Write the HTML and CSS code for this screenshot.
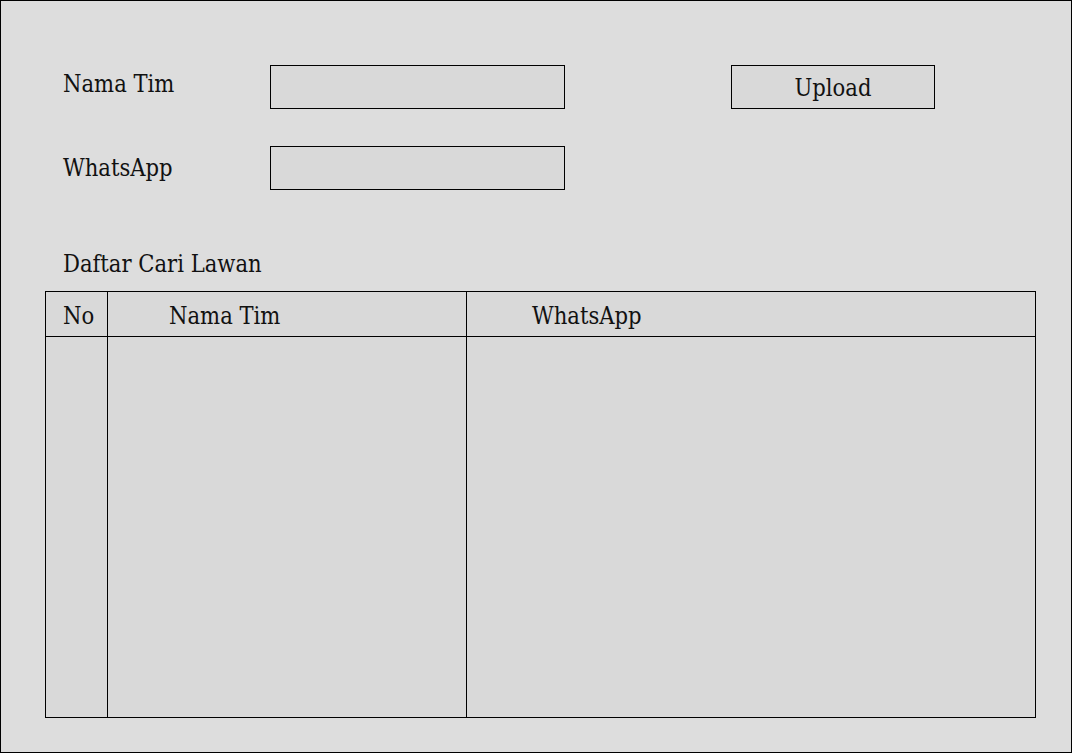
FILE: index.html
```html
<!DOCTYPE html>
<html>
<head>
<meta charset="utf-8">
<link rel="stylesheet" href="styles.css">
</head>
<body>
<div class="page">
  <div class="form-row row-one">
    <div class="label label-up">Nama Tim</div>
    <div class="input"></div>
    <div class="button">Upload</div>
  </div>
  <div class="form-row row-two">
    <div class="label">WhatsApp</div>
    <div class="input"></div>
  </div>
  <div class="section-title">Daftar Cari Lawan</div>
  <div class="table">
    <div class="thead">
      <div class="cell col-no">No</div>
      <div class="cell col-name">Nama Tim</div>
      <div class="cell col-wa">WhatsApp</div>
    </div>
    <div class="tbody">
      <div class="cell col-no"></div>
      <div class="cell col-name"></div>
      <div class="cell col-wa"></div>
    </div>
  </div>
</div>
</body>
</html>
```

FILE: styles.css
```css
html, body {
  margin: 0;
  padding: 0;
  background: #dddddd;
}
.page {
  box-sizing: border-box;
  width: 1072px;
  height: 753px;
  border: 1px solid #000;
  background: #dddddd;
  font-family: "DejaVu Serif Condensed", "DejaVu Serif", serif;
  font-size: 23.5px;
  color: #111;
  padding: 64px 0 0 44px;
  display: flex;
  flex-direction: column;
}
.form-row {
  display: flex;
  align-items: center;
  height: 44px;
}
.row-two {
  margin-top: 37px;
}
.label {
  width: 225px;
  padding-left: 18px;
  box-sizing: border-box;
}
.label-up {
  padding-bottom: 7px;
}
.input {
  box-sizing: border-box;
  width: 295px;
  height: 44px;
  border: 1px solid #000;
  background: #d9d9d9;
}
.button {
  box-sizing: border-box;
  margin-left: 166px;
  width: 204px;
  height: 44px;
  border: 1px solid #000;
  background: #d9d9d9;
  display: flex;
  align-items: center;
  justify-content: center;
  padding-top: 2px;
}
.section-title {
  margin-top: 62px;
  padding-left: 18px;
  height: 39px;
  line-height: 24px;
  flex-shrink: 0;
}
.table {
  box-sizing: border-box;
  width: 991px;
  height: 427px;
  border: 1px solid #000;
  background: #d9d9d9;
  display: flex;
  flex-direction: column;
  flex-shrink: 0;
}
.thead {
  display: flex;
  height: 44px;
  border-bottom: 1px solid #000;
}
.tbody {
  display: flex;
  flex: 1;
}
.cell {
  box-sizing: border-box;
  display: flex;
  align-items: center;
}
.thead .cell {
  padding-top: 3px;
}
.col-no {
  width: 62px;
  border-right: 1px solid #000;
  padding-left: 17px;
}
.col-name {
  width: 359px;
  border-right: 1px solid #000;
  padding-left: 61px;
}
.col-wa {
  flex: 1;
  padding-left: 65px;
}
```
